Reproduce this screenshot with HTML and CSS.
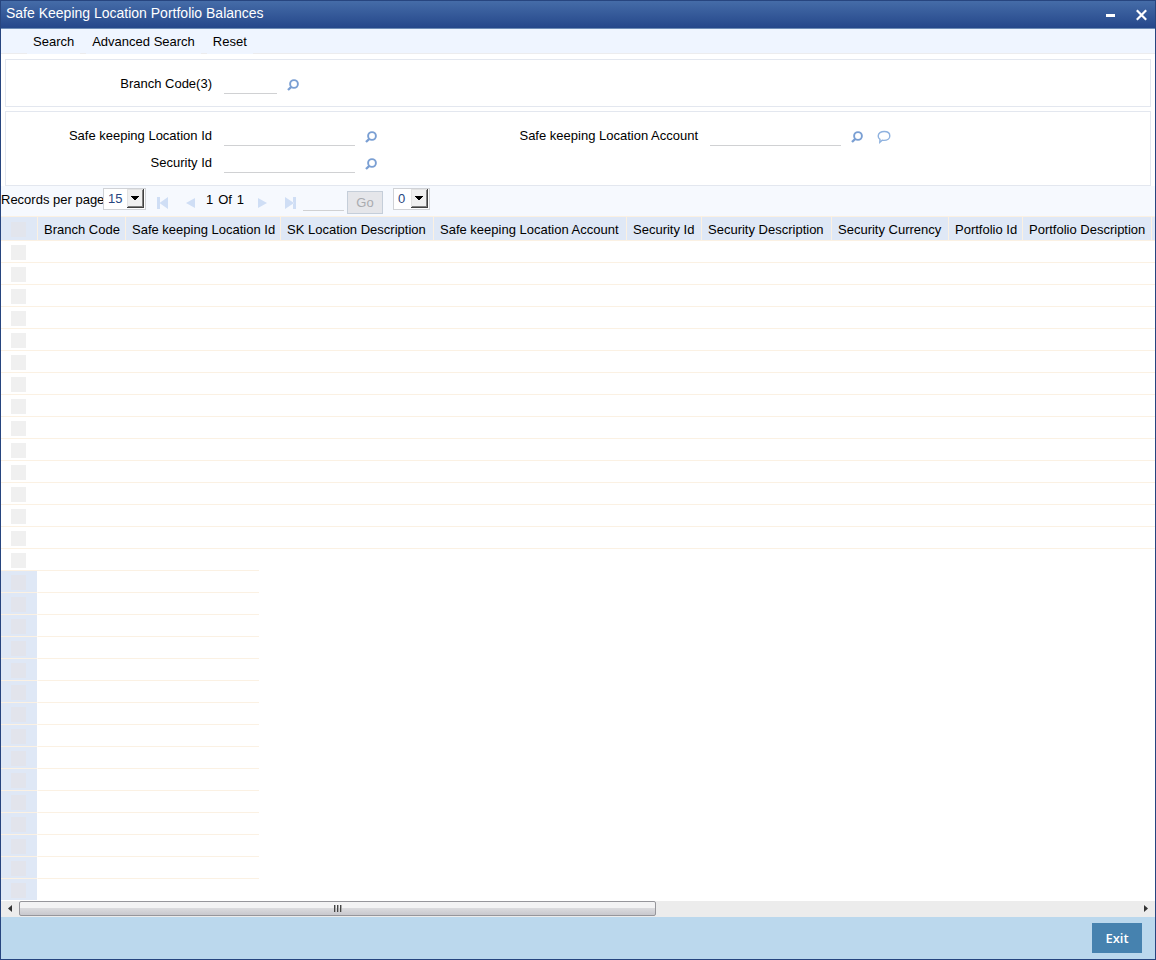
FILE: index.html
```
<!DOCTYPE html>
<html lang="en">
<head>
<meta charset="utf-8">
<title>Safe Keeping Location Portfolio Balances</title>
<link rel="stylesheet" href="styles.css">
</head>
<body>
<svg class="symbols" aria-hidden="true">
  <symbol id="lens" viewBox="0 0 12 12"><circle cx="7" cy="5" r="3.9" fill="none" stroke="#7a9fd3" stroke-width="1.9"/><path d="M4.3 7.9 1 11" stroke="#7a9fd3" stroke-width="2.3" fill="none"/></symbol>
  <symbol id="bubble" viewBox="0 0 14 14"><path d="M7.2 1.5C10.4 1.5 12.8 3.200 12.800 5.900S10.300 10.400 7 10.400C6.300 10.400 5.700 10.300 5.200 10.200L2.800 12.300 3 9.400C1.800 8.600 1.200 7.300 1.200 5.900 1.200 3.200 4 1.500 7.200 1.500Z" fill="none" stroke="#8fb2df" stroke-width="1.400"/></symbol>
  <symbol id="down" viewBox="0 0 17 19"><path d="M0 0h17v19H0z" fill="#404040"/><path d="M0 0h16v18H0z" fill="#e3e3e3"/><path d="M1 17h14V1h1v17H1z" fill="#808080"/><path d="M1 1h14v16H1z" fill="#f0f0f0"/><path d="M4 7h8v1h-1v1h-1v1H9v1H7v-1H6V9H5V8H4z" fill="#000"/></symbol>
</svg>
<main class="window">
  <header class="titlebar">
    <h1>Safe Keeping Location Portfolio Balances</h1>
    <button class="win-btn" type="button" aria-label="Minimize"><svg width="11" height="12" viewBox="0 0 11 12"><path d="M1 5h9v3H1z" fill="#fff"/></svg></button>
    <button class="win-btn" type="button" aria-label="Close"><svg width="11" height="12" viewBox="0 0 11 12"><path d="m.8 1.300 9.400 9.400M10.200 1.300.8 10.700" stroke="#fff" stroke-width="2.200"/></svg></button>
  </header>
  <nav class="toolbar">
    <button type="button">Search</button>
    <button type="button">Advanced Search</button>
    <button type="button">Reset</button>
  </nav>
  <form class="criteria">
    <section class="panel">
      <div class="field">
        <label for="branch">Branch Code(3)</label>
        <input id="branch" class="short" type="text">
        <button type="button" aria-label="Look up branch"><svg width="12" height="12"><use href="#lens"/></svg></button>
      </div>
    </section>
    <section class="panel">
      <div class="field">
        <label for="loc">Safe keeping Location Id</label>
        <input id="loc" type="text">
        <button type="button" aria-label="Look up location"><svg width="12" height="12"><use href="#lens"/></svg></button>
      </div>
      <div class="field">
        <label for="acct">Safe keeping Location Account</label>
        <input id="acct" type="text">
        <button type="button" aria-label="Look up account"><svg width="12" height="12"><use href="#lens"/></svg></button>
        <button class="note" type="button" aria-label="Account details"><svg width="14" height="14"><use href="#bubble"/></svg></button>
      </div>
      <div class="field">
        <label for="sec">Security Id</label>
        <input id="sec" type="text">
        <button type="button" aria-label="Look up security"><svg width="12" height="12"><use href="#lens"/></svg></button>
      </div>
    </section>
  </form>
  <div class="pager">
    <label class="per-page" for="size">Records per page</label>
    <span class="picker wide"><select id="size"><option>15</option></select><svg width="17" height="19"><use href="#down"/></svg></span>
    <div class="steps">
      <button type="button" disabled aria-label="First page"><svg width="12" height="12" viewBox="0 0 12 12"><path d="M0 0h3v12H0zM11 0v12L2.500 6z"/></svg></button>
      <button type="button" disabled aria-label="Previous page"><svg width="12" height="12" viewBox="0 0 12 12"><path d="M10 1v10L1 6z"/></svg></button>
      <span class="count"><span>1</span><span>Of</span><span>1</span></span>
      <button type="button" disabled aria-label="Next page"><svg width="12" height="12" viewBox="0 0 12 12"><path d="M1 1v10l9-5z"/></svg></button>
      <button type="button" disabled aria-label="Last page"><svg width="12" height="12" viewBox="0 0 12 12"><path d="M8 0h3v12H8zM0 0v12l9-6z"/></svg></button>
    </div>
    <input class="goto" type="text" aria-label="Page number">
    <button class="go" type="button" disabled>Go</button>
    <span class="picker"><select aria-label="Locked columns"><option>0</option></select><svg width="17" height="19"><use href="#down"/></svg></span>
  </div>
  <div class="results">
    <table class="grid">
      <colgroup><col class="c-tick"><col class="c-branch"><col class="c-loc"><col class="c-desc"><col class="c-acct"><col class="c-sec"><col class="c-secdesc"><col class="c-cur"><col class="c-port"><col class="c-portdesc"><col class="c-rest"></colgroup>
      <thead><tr><th><input type="checkbox" disabled aria-label="Select all"></th><th>Branch Code</th><th>Safe keeping Location Id</th><th>SK Location Description</th><th>Safe keeping Location Account</th><th>Security Id</th><th>Security Description</th><th>Security Currency</th><th>Portfolio Id</th><th>Portfolio Description</th><th></th></tr></thead>
      <tbody id="rows"></tbody>
    </table>
    <table class="grid extra">
      <colgroup><col class="c-tick"><col></colgroup>
      <tbody id="extra"></tbody>
    </table>
  </div>
  <div class="scrollbar">
    <button type="button" aria-label="Scroll left"><svg width="4" height="7" viewBox="0 0 4 7"><path d="M4 0v7L0 3.500z" fill="#333"/></svg></button>
    <div class="track"><div class="thumb"><i></i><i></i><i></i></div></div>
    <button type="button" aria-label="Scroll right"><svg width="4" height="7" viewBox="0 0 4 7"><path d="M0 0v7l4-3.500z" fill="#333"/></svg></button>
  </div>
  <footer class="footer"><button type="button">Exit</button></footer>
</main>
<script src="rows.js"></script>
</body>
</html>
```
FILE: styles.css
```
* { box-sizing: border-box; }
body { margin: 0; font: 13px/16px "Liberation Sans", Arial, sans-serif; color: #000; background: #fff; }
button, input, select { font: inherit; color: inherit; margin: 0; padding: 0; border: 0; border-radius: 0; background: none; appearance: none; }
svg { display: block; }
.symbols { position: absolute; width: 0; height: 0; }
.window { display: flex; flex-direction: column; height: 100vh; border: 1px solid #27457f; overflow: hidden; }

.titlebar { display: flex; align-items: center; gap: 20px; flex: none; height: 28px; padding: 0 8px 0 5px; border-bottom: 1px solid #6d8cb5; background: linear-gradient(#456ca8, #25478a); }
.titlebar h1 { flex: 1; margin: 0; padding-bottom: 3px; font-size: 14px; font-weight: normal; line-height: 16px; color: #fff; }

.toolbar { display: flex; gap: 6px; flex: none; height: 25px; padding-left: 26px; border-bottom: 1px solid #ececee; background: #eff5ff; }
.toolbar button { height: 25px; padding: 0 6px; background: #eff5ff; }

.criteria { flex: none; display: flex; flex-direction: column; gap: 4px; padding: 5px 4px 0; }
.panel { display: grid; grid-template-columns: 486px 1fr; row-gap: 7px; padding: 14px 0 12px; border: 1px solid #e3e7ef; }
.field { display: flex; align-items: center; height: 20px; }
.field label { width: 206px; margin-right: 12px; text-align: right; white-space: nowrap; }
.field input, .goto { width: 131px; height: 20px; border-bottom: 1px solid #d0d1d3; }
.field .short { width: 53px; }
.field button { margin: 2px 0 0 10px; }
.field .note { margin-left: 14px; }

.pager { display: flex; align-items: flex-start; flex: none; height: 30px; padding-top: 2px; background: #f6f9fe; }
.per-page { width: 102px; padding-top: 2px; line-height: 20px; white-space: nowrap; }
.picker { position: relative; width: 37px; height: 22px; border: 1px solid #d0d2d6; background: #fff; }
.picker.wide { width: 43px; }
.picker select { display: block; width: 100%; height: 20px; padding-left: 4px; color: #27457f; }
.picker svg { position: absolute; top: 0; right: 1px; pointer-events: none; }
.steps { display: flex; align-items: flex-start; gap: 16px; padding: 9px 6px 0 11px; }
.steps button { width: 12px; height: 12px; }
.steps path { fill: #cfdef5; }
.count { display: flex; justify-content: space-between; width: 38px; margin: -5px -3px 0 -7px; }
.goto { width: 41px; height: 21px; margin-top: 2px; }
.go { width: 36px; height: 23px; margin: 3px 10px 0 3px; border: 1px solid #c5ced9; background: #e5e6ea; color: #a9abaf; }

.results { flex: 1; min-height: 0; overflow: hidden; }
.grid { width: 1280px; table-layout: fixed; border-spacing: 0; }
.grid th { height: 25px; padding: 2px 0 0 6px; border: solid #fbf1e3; border-width: 1px 1px 1px 0; background: #dfe8f6; font-weight: normal; text-align: left; white-space: nowrap; }
.grid td { height: 22px; padding: 0; border-bottom: 1px solid #fbf1e3; }
.grid tr > :first-child { padding: 2px 0 0 10px; }
.grid input { display: block; width: 15px; height: 15px; background: #f0f0f0; }
.grid th input { background: #e2e5ed; }
#rows tr:last-child td { height: 21px; border-bottom: 0; }
.extra { width: 258px; border-top: 1px solid #fbf1e3; }
.extra td:first-child { background: #dfe8f6; border-right: 1px solid #fff; }
.extra tr:last-child td { border-bottom-color: #fff; }
.extra input { background: #e2e4ec; }
.c-tick { width: 37px; }
.c-branch { width: 88px; }
.c-loc { width: 155px; }
.c-desc { width: 153px; }
.c-acct { width: 193px; }
.c-sec { width: 75px; }
.c-secdesc { width: 130px; }
.c-cur { width: 117px; }
.c-port { width: 74px; }
.c-portdesc { width: 129px; }

.scrollbar { display: flex; flex: none; height: 16px; padding-bottom: 1px; background: #ececec; }
.scrollbar button { display: grid; place-items: center; width: 18px; }
.track { flex: 1; }
.thumb { display: flex; align-items: center; justify-content: center; gap: 1px; width: 57%; height: 15px; border: 1px solid #96969b; border-radius: 2px; background: linear-gradient(#f3f3f4 0 45%, #dadadd 50%, #c8c8cd); }
.thumb i { width: 2px; height: 7px; border-left: 1px solid #444; border-right: 1px solid #aaa; }

.footer { display: flex; align-items: center; justify-content: flex-end; flex: none; height: 42px; padding-right: 13px; background: #bbd8ed; }
.footer button { width: 50px; height: 30px; background: #4682af; color: #fff; font: 600 13px/16px "Open Sans", "Noto Sans", sans-serif; }
```
FILE: rows.js
```
const tick = '<td><input type="checkbox" disabled aria-label="Select row"></td>';
document.getElementById('rows').innerHTML = ('<tr>' + tick + '<td></td>'.repeat(10) + '</tr>').repeat(15);
document.getElementById('extra').innerHTML = ('<tr>' + tick + '<td></td></tr>').repeat(15);
```
